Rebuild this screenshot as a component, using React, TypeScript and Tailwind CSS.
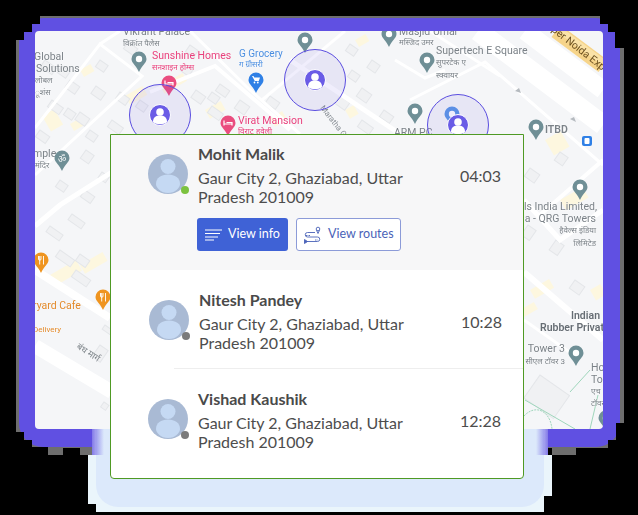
import React from 'react';

const address = "Gaur City 2, Ghaziabad, Uttar Pradesh 201009";

type Row = { name: string; time: string; online?: boolean };
type Glyph = "dot" | "bed" | "cart" | "fork" | "om";

const roads: [string, number][] = [
  ["M35 128 L60 96 L100 44 L142 76 L35 175", 3],
  ["M100 44 L120 31", 3],
  ["M150 92 L215 66 L290 130", 4],
  ["M190 31 L250 90 L300 134", 3],
  ["M112 172 L60 205 L35 226", 5],
  ["M35 270 L110 318", 8],
  ["M35 346 L112 392", 14],
  ["M290 60 L400 134", 5],
  ["M262 100 L345 31", 3],
  ["M478 31 L603 125", 20],
  ["M525 31 L603 90", 18],
  ["M410 100 L485 62 L603 165", 3],
  ["M430 31 L500 76", 3],
  ["M524 200 L560 240 L603 210", 5],
  ["M603 160 L540 215", 4],
  ["M524 272 L603 340", 6],
  ["M524 320 L575 356", 3],
  ["M395 60 L425 78 L445 70", 3],
];

const blocks: [number, number, number, number][] = [
  [45, 60, 14, 8], [62, 66, 10, 8], [70, 80, 12, 9], [52, 100, 14, 8], [68, 108, 10, 8], [80, 112, 12, 9],
  [112, 120, 14, 8], [96, 86, 12, 9], [120, 92, 12, 8], [40, 130, 12, 8], [86, 150, 10, 10], [102, 172, 9, 7],
  [72, 214, 16, 7], [50, 226, 16, 7], [60, 250, 18, 8], [80, 254, 12, 8], [76, 270, 18, 8], [196, 90, 12, 9],
  [212, 92, 10, 8], [220, 84, 12, 8], [212, 106, 14, 8], [240, 100, 12, 10], [270, 96, 12, 8], [185, 64, 10, 8],
  [128, 42, 12, 8], [362, 88, 12, 10], [340, 96, 12, 9], [372, 60, 10, 9], [350, 44, 10, 8], [384, 110, 12, 8],
  [362, 120, 14, 8], [352, 70, 10, 8], [560, 152, 10, 10], [530, 168, 12, 10], [556, 240, 10, 12], [528, 225, 10, 12],
  [575, 280, 12, 10], [540, 375, 36, 28], [105, 325, 14, 5], [100, 345, 10, 14], [104, 402, 6, 6], [190, 45, 10, 8],
  [140, 100, 10, 8], [100, 60, 10, 8], [85, 190, 12, 8], [60, 180, 10, 8], [90, 130, 10, 8],
];

const yellows: [number, number, number, number][] = [
  [160, 86, 26, 9], [125, 96, 20, 10], [205, 110, 18, 10], [270, 118, 14, 10], [80, 70, 12, 8],
  [42, 116, 14, 18], [70, 124, 14, 8], [355, 40, 12, 8], [345, 110, 10, 10], [80, 265, 26, 10],
  [50, 275, 30, 12], [545, 140, 18, 18], [560, 200, 26, 12], [530, 290, 22, 10], [590, 290, 12, 12],
  [520, 310, 16, 8],
];

function PinGlyph({ x, y, glyph }: { x: number; y: number; glyph: Glyph }) {
  if (glyph === "bed") {
    return <path d={`M${x - 4} ${y - 2.500}v5M${x - 4} ${y + 1}h8v1.500M${x - 1.500} ${y - 0.500}h5.500v1.500`} stroke="#fff" strokeWidth={1.200} fill="none" />;
  }
  if (glyph === "cart") {
    return (
      <g fill="#fff">
        <path d={`M${x - 4} ${y - 4}h1.500l.8 1.500h5.700l-1.200 3.500h-4z`} />
        <circle cx={x - 1.500} cy={y + 2.500} r={0.9} />
        <circle cx={x + 1.800} cy={y + 2.500} r={0.9} />
      </g>
    );
  }
  if (glyph === "fork") {
    return <path d={`M${x - 2.500} ${y - 4}v3a1.200 1.200 0 0 0 2.500 0v-3M${x - 1.300} ${y - 4}v8.500M${x + 2.500} ${y - 4}v8.500`} stroke="#fff" strokeWidth={0.9} fill="none" />;
  }
  if (glyph === "om") {
    return <text x={x} y={y + 3.500} fontSize={9} fill="#fff" textAnchor="middle">ॐ</text>;
  }
  return <circle cx={x} cy={y} r={3.200} fill="#fff" />;
}

function Pin({ x, y, color, glyph = "dot" }: { x: number; y: number; color: string; glyph?: Glyph }) {
  return (
    <g>
      <path d={`M${x - 7.500} ${y}a7.500 7.500 0 1 1 15 0c0 4-5 7-7.500 13c-2.500-6-7.500-9-7.500-13z`} fill={color} />
      <PinGlyph x={x} y={y} glyph={glyph} />
    </g>
  );
}

function Marker({ x, y }: { x: number; y: number }) {
  return (
    <g>
      <circle cx={x} cy={y} r={30.500} fill="#6a5ce6" fillOpacity={0.1} stroke="#5b4ee0" strokeWidth={1} />
      <circle cx={x} cy={y} r={10.500} fill="#6a5ce6" stroke="#fff" strokeWidth={1} />
      <circle cx={x} cy={y - 3} r={3.800} fill="#fff" />
      <path d={`M${x - 7} ${y + 7}c0-5 3-6.500 7-6.500s7 1.500 7 6.500c-3 3-11 3-14 0z`} fill="#fff" />
    </g>
  );
}

function Label({
  x,
  y,
  children,
  fill = "#7b8288",
  size = 10.500,
  end,
  bold,
}: {
  x: number;
  y: number;
  children: string;
  fill?: string;
  size?: number;
  end?: boolean;
  bold?: boolean;
}) {
  return (
    <text
      x={x}
      y={y}
      fontSize={size}
      fill={fill}
      textAnchor={end ? "end" : "start"}
      fontWeight={bold ? 600 : 400}
      stroke="#fff"
      strokeWidth={0.3}
      paintOrder="stroke"
    >
      {children}
    </text>
  );
}

function MapArt() {
  return (
    <svg viewBox="35 31 568 398" className="block w-full h-full blur-[0.3px] [font-family:Roboto,'Noto_Sans',sans-serif]">
      <rect x={35} y={31} width={568} height={398} fill="#f5f6f8" />
      {yellows.map(([x, y, w, h], i) => (
        <rect key={i} x={x} y={y} width={w} height={h} fill="#fdf7df" transform={`rotate(-30 ${x} ${y})`} />
      ))}
      {blocks.map(([x, y, w, h], i) => (
        <rect key={i} x={x} y={y} width={w} height={h} fill="#f0f1f3" stroke="#e4e6e9" strokeWidth={1} transform={`rotate(35 ${x} ${y})`} />
      ))}
      {roads.map(([d, w], i) => (
        <path key={i} d={d} fill="none" stroke="#fff" strokeWidth={w} />
      ))}
      <path d="M556 31 L603 66" stroke="#f6d48a" strokeWidth={15} fill="none" />
      <path d="M561 31 L603 62" stroke="#fbe3a8" strokeWidth={6} fill="none" />
      <text x={541} y={23} fontSize={10.500} fill="#6b5020" transform="rotate(38 541 23)">Upper Noida Exp</text>
      <path d="M525 400 L575 429 M570 392 L590 370 M598 395 L590 429" stroke="#9fd6bc" strokeWidth={1} fill="none" />
      <path d="M524 416 C535 404 550 410 552 429" stroke="#9fd6bc" strokeWidth={1} strokeDasharray="2 1" fill="none" />

      <Label x={123} y={35}>Vikrant Palace</Label>
      <Label x={123} y={46} size={8}>विक्रांत पैलेस</Label>
      <Pin x={139} y={59} color="#6f8f96" />
      <Label x={152} y={59} fill="#e8407c">Sunshine Homes</Label>
      <Label x={152} y={70} fill="#e8407c" size={8}>सनशाइन होम्स</Label>
      <Pin x={169} y={83} color="#ea4d7f" glyph="bed" />
      <Label x={239} y={57} fill="#4a8ee0" size={10}>G Grocery</Label>
      <Label x={239} y={67} fill="#4a8ee0" size={8}>ग ग्रोसरी</Label>
      <Pin x={256} y={80} color="#2f80e6" glyph="cart" />
      <Pin x={305} y={40} color="#6f8f96" />
      <Label x={238} y={124} fill="#e8407c">Virat Mansion</Label>
      <Label x={238} y={134} fill="#e8407c" size={8}>विराट हवेली</Label>
      <Pin x={228} y={123} color="#ea4d7f" glyph="bed" />

      <Label x={34} y={60}>Global</Label>
      <Label x={36} y={72}>Solutions</Label>
      <Label x={35} y={83} size={8}>लोबल</Label>
      <Label x={35} y={95} size={8}>ूशंस</Label>
      <Label x={33} y={157}>mple</Label>
      <Label x={35} y={168} size={8}>मंदिर</Label>
      <Pin x={62} y={158} color="#6f8f96" glyph="om" />

      <Label x={399} y={35}>Masjid Umar</Label>
      <Label x={399} y={45} size={8}>मस्जिद उमर</Label>
      <Pin x={389} y={34} color="#6f8f96" />
      <Label x={436} y={54}>Supertech E Square</Label>
      <Label x={436} y={65} size={8}>सुपरटेक ए</Label>
      <Label x={436} y={78} size={8}>स्क्वायर</Label>
      <Pin x={427} y={60} color="#6f8f96" />
      <Pin x={415} y={111} color="#6f8f96" />
      <Label x={394} y={136}>ARM PC</Label>
      <text x={320} y={108} fontSize={8} fill="#8a9096" transform="rotate(52 320 108)">Maratha Gali</text>
      <path d="M515 91 l6 2 l-2 -5z M570 119 l6 3 l-2 -5z" fill="#b5babf" />

      <Pin x={536} y={127} color="#6f8f96" />
      <Label x={545} y={133} bold>ITBD</Label>
      <rect x={582} y={136} width={10} height={10} rx={2} fill="#2f80e6" />
      <rect x={584.500} y={138} width={5} height={6} rx={1} fill="#fff" />
      <Pin x={580} y={187} color="#6f8f96" />
      <Label x={597} y={210} end>ls India Limited,</Label>
      <Label x={596} y={222} end>a - QRG Towers</Label>
      <Label x={596} y={233} end size={8}>हैवेल्स इंडिया</Label>
      <Label x={596} y={246} end size={8}>लिमिटेड</Label>
      <Label x={600} y={319} bold fill="#666d74" end>Indian</Label>
      <Label x={540} y={331} bold fill="#666d74">Rubber Privat</Label>
      <Label x={565} y={352} end>Tower 3</Label>
      <Label x={565} y={364} end size={8}>सीएल टॉवर 3</Label>
      <Pin x={576} y={353} color="#6f8f96" />
      <Label x={591} y={371}>Ho</Label>
      <Label x={591} y={383}>To</Label>
      <Label x={591} y={394} size={8}>एच</Label>
      <Label x={591} y={406} size={8}>टॉवर</Label>
      <Pin x={606} y={418} color="#6f8f96" />

      <Pin x={41} y={260} color="#ef941f" glyph="fork" />
      <Pin x={103} y={297} color="#ef941f" glyph="fork" />
      <Label x={33} y={309} fill="#e2892a">ryard Cafe</Label>
      <Label x={33} y={332} fill="#e2892a" size={8}>Delivery</Label>
      <text x={76} y={348} fontSize={9} fill="#7d8489" transform="rotate(33 76 348)">बंध मार्ग</text>

      <Pin x={452} y={114} color="#5b96e6" />
      <Marker x={160} y={115} />
      <Marker x={315} y={80} />
      <Marker x={458} y={125} />
    </svg>
  );
}

function Avatar({ online }: { online?: boolean }) {
  return (
    <div className="relative w-10 h-10 shrink-0">
      <svg viewBox="0 0 40 40" className="w-10 h-10">
        <circle cx={20} cy={20} r={20} fill="#a9bad4" />
        <circle cx={20} cy={12.500} r={7.500} fill="#c5d9f3" />
        <path d="M8 30c0-6 5-9.500 12-9.500s12 3.500 12 9.500c0 4-5 9-12 9s-12-5-12-9z" fill="#c5d9f3" />
      </svg>
      <div
        className={`absolute right-[-1px] bottom-0 w-2 h-2 rounded-full ${online ? "bg-[#7cc23f]" : "bg-[#7b7b7b]"}`}
      />
    </div>
  );
}

function Details({ name, time }: Row) {
  return (
    <div className="flex items-start">
      <div className="w-[262px] ml-[10px] pr-[50px]">
        <div className="text-base leading-[19px] font-bold text-[#4a4a4a] mt-[-10px]">{name}</div>
        <div className="text-base leading-[19px] text-[#4d4d4d] mt-[5px]">{address}</div>
      </div>
      <div className="text-base leading-[19px] text-[#4d4d4d] mt-[12px]">{time}</div>
    </div>
  );
}

function InfoIcon() {
  return (
    <svg viewBox="0 0 17 12" className="w-[17px] h-3" stroke="#fff" strokeWidth={1} fill="none">
      <path d="M0 1h17M0 4.500h15M0 8h13M0 11h9" />
    </svg>
  );
}

function RouteIcon() {
  return (
    <svg viewBox="0 0 17 18" className="w-[17px] h-[18px]" fill="none" stroke="#4a62b8" strokeWidth={0.9}>
      <path d="M11 6.500H3.500a2.200 2.200 0 0 0 0 4.500H13.500a2.200 2.200 0 0 1 0 4.500H3" />
      <path d="M2 9.500l4 0M11 14l3 0" strokeDasharray="1.500 1" />
      <path d="M0.500 13.500l3 2-3 2z" fill="#4a62b8" />
      <circle cx={14} cy={3} r={1.800} />
      <path d="M12.500 4.200L14 7.500L15.500 4.200" />
    </svg>
  );
}

export default function App() {
  return (
    <div className="relative w-[638px] h-[515px] bg-black overflow-hidden [font-family:Lato,sans-serif]">
      {/* frame around the map */}
      <div className="absolute left-4 top-4 w-[608px] h-[439px] pl-[3px] pr-1 pt-[2px] pb-2 bg-[#6e6e6e] [clip-path:polygon(24px_0,584px_0,584px_8px,592px_8px,592px_16px,599px_16px,599px_32px,608px_32px,608px_407px,600px_407px,600px_424px,592px_424px,592px_432px,560px_432px,560px_439px,536px_439px,536px_432px,76px_432px,76px_439px,64px_439px,64px_432px,47px_432px,47px_439px,32px_439px,32px_431px,16px_431px,16px_424px,8px_424px,8px_416px,0_416px,0_24px,8px_24px,8px_16px,16px_16px,16px_8px,24px_8px)]">
        <div className="w-full h-full pl-4 pr-[17px] pt-[13px] pb-[18px] bg-[#6050e2] rounded-[24px]">
          <div className="w-full h-full rounded-[4px] overflow-hidden">
            <MapArt />
          </div>
        </div>
      </div>

      {/* soft glow under the card */}
      <div className="absolute left-[88px] top-[429px] w-[464px] h-[83px] px-2 pb-[5px] bg-[#eaf5fb] [clip-path:polygon(4px_0,460px_0,460px_26px,464px_26px,464px_67px,456px_67px,456px_83px,8px_83px,8px_75px,0_75px,0_26px,4px_26px)]">
        <div className="w-full h-full bg-[#dce9fb] rounded-b-[22px]" />
        <div className="absolute left-0 top-0 w-4 h-[26px] bg-gradient-to-r from-[#6050e2] to-transparent" />
        <div className="absolute right-0 top-0 w-4 h-[26px] bg-gradient-to-l from-[#6050e2] to-transparent" />
      </div>

      {/* list card */}
      <div className="absolute left-[110px] top-[134px] w-[414px] h-[345px] bg-white border border-[#4f9a24] rounded-b-[4px] overflow-hidden">
        <div className="h-[135px] bg-[#f7f7f8] pl-[37px] pt-[19px]">
          <div className="flex items-start">
            <Avatar online />
            <Details name="Mohit Malik" time="04:03" />
          </div>
          <div className="flex gap-2 ml-[49px] mt-[12px]">
            <button className="flex items-center gap-[6px] w-[91px] h-[33px] pl-2 bg-[#3f62d6] rounded-[3px] text-[12.5px] text-white">
              <InfoIcon />
              View info
            </button>
            <button className="flex items-center gap-[7px] w-[105px] h-[33px] pl-[7px] bg-white border border-[#8c9bd8] rounded-[3px] text-[12.5px] text-[#4a62b8]">
              <RouteIcon />
              View routes
            </button>
          </div>
        </div>
        <div className="h-[98px] pl-[38px] pt-[30px]">
          <div className="flex items-start">
            <Avatar />
            <Details name="Nitesh Pandey" time="10:28" />
          </div>
        </div>
        <div className="h-px ml-[63px] bg-[#eeeeee]" />
        <div className="pl-[37px] pt-[30px]">
          <div className="flex items-start">
            <Avatar />
            <Details name="Vishad Kaushik" time="12:28" />
          </div>
        </div>
      </div>
    </div>
  );
}
